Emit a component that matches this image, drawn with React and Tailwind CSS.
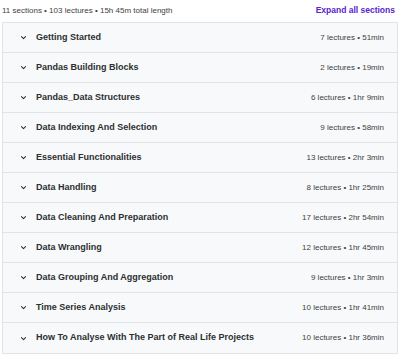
const sections = [
  ["Getting Started", "7 lectures • 51min"],
  ["Pandas Building Blocks", "2 lectures • 19min"],
  ["Pandas_Data Structures", "6 lectures • 1hr 9min"],
  ["Data Indexing And Selection", "9 lectures • 58min"],
  ["Essential Functionalities", "13 lectures • 2hr 3min"],
  ["Data Handling", "8 lectures • 1hr 25min"],
  ["Data Cleaning And Preparation", "17 lectures • 2hr 54min"],
  ["Data Wrangling", "12 lectures • 1hr 45min"],
  ["Data Grouping And Aggregation", "9 lectures • 1hr 3min"],
  ["Time Series Analysis", "10 lectures • 1hr 41min"],
  ["How To Analyse With The Part of Real Life Projects", "10 lectures • 1hr 36min"],
];

function Chevron() {
  return (
    <svg width="7" height="7" viewBox="0 0 24 24" fill="none" stroke="#2d2f31" strokeWidth="3.5" strokeLinecap="round" strokeLinejoin="round">
      <path d="M5 9l7 7 7-7" />
    </svg>
  );
}

export default function App() {
  return (
    <div className="w-[400px] h-[354px] bg-white overflow-hidden" style={{ fontFamily: '"Liberation Sans", Arial, sans-serif' }}>
      <div className="flex items-center justify-between pl-[2px] pr-[5px] h-[22px] pb-[1px]">
        <span className="text-[8px] text-[#3e4143]">11 sections • 103 lectures • 15h 45m total length</span>
        <span className="text-[8.5px] font-bold text-[#5624d0]">Expand all sections</span>
      </div>
      <div className="mx-[2px] border border-[#e2e5e8]">
        {sections.map(([title, meta]) => (
          <div key={title} className="flex items-center justify-between h-[30px] bg-[#f7f9fa] border-b border-[#e2e5e8] last:border-b-0 pl-[17px] pr-[13px]">
            <div className="flex items-center gap-[9px]">
              <Chevron />
              <span className="text-[9px] font-bold text-[#2d2f31]">{title}</span>
            </div>
            <span className="text-[8px] text-[#3e4143]">{meta}</span>
          </div>
        ))}
      </div>
    </div>
  );
}
